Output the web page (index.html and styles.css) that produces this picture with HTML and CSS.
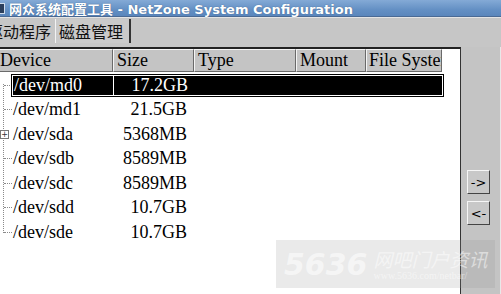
FILE: index.html
```html
<!DOCTYPE html>
<html lang="zh">

<head>
    <meta charset="UTF-8">
    <title>NetZone System Configuration</title>
    <link rel="stylesheet" href="styles.css">
</head>

<body>
    <div class="window">
        <header class="titlebar">
            <span class="title-icon"></span>
            <span class="title-text">网众系统配置工具 - NetZone System Configuration</span>
        </header>

        <nav class="tabs">
            <div class="tab tab-cut">驱动程序</div>
            <div class="tab tab-active">磁盘管理</div>
        </nav>

        <div class="main">
            <section class="listview">
                <div class="list-head">
                    <div class="col col-device">Device</div>
                    <div class="col col-size">Size</div>
                    <div class="col col-type">Type</div>
                    <div class="col col-mount">Mount</div>
                    <div class="col col-fs">File Syster</div>
                </div>

                <div class="list-body">
                    <div class="tree-line"></div>
                    <div class="row">
                        <span class="node"></span>
                        <span class="selection">
                            <span class="cell-device">/dev/md0</span>
                            <span class="cell-size">17.2GB</span>
                        </span>
                    </div>
                    <div class="row">
                        <span class="node"></span>
                        <span class="cell-device">/dev/md1</span>
                        <span class="cell-size">21.5GB</span>
                    </div>
                    <div class="row">
                        <span class="node node-expand"><span class="plus">+</span></span>
                        <span class="cell-device">/dev/sda</span>
                        <span class="cell-size">5368MB</span>
                    </div>
                    <div class="row">
                        <span class="node"></span>
                        <span class="cell-device">/dev/sdb</span>
                        <span class="cell-size">8589MB</span>
                    </div>
                    <div class="row">
                        <span class="node"></span>
                        <span class="cell-device">/dev/sdc</span>
                        <span class="cell-size">8589MB</span>
                    </div>
                    <div class="row">
                        <span class="node"></span>
                        <span class="cell-device">/dev/sdd</span>
                        <span class="cell-size">10.7GB</span>
                    </div>
                    <div class="row">
                        <span class="node"></span>
                        <span class="cell-device">/dev/sde</span>
                        <span class="cell-size">10.7GB</span>
                    </div>
                </div>
            </section>

            <aside class="sidebar">
                <button class="arrow-button">-&gt;</button>
                <button class="arrow-button">&lt;-</button>
            </aside>
        </div>

        <div class="watermark">
            <span class="wm-big">5636</span>
            <span class="wm-side">
                <span class="wm-cn">网吧门户资讯</span>
                <span class="wm-url">www.5636.com/netbar/</span>
            </span>
        </div>
    </div>
</body>

</html>
```

FILE: styles.css
```css
* {
    box-sizing: border-box;
    margin: 0;
    padding: 0;
}

body {
    background: #c6c6c6;
    font-family: 'Liberation Serif', serif;
    overflow: hidden;
}

.window {
    height: 294px;
    overflow: hidden;
    position: relative;
    width: 501px;
}

.titlebar {
    align-items: center;
    background: linear-gradient(180deg, #84aad6, #6490c4 60%, #5a86bc);
    border-bottom: 1px solid #4a6a94;
    display: flex;
    height: 17px;
}

.title-icon {
    background: #2b3f5c;
    border: 1px solid #cfdcec;
    height: 11px;
    margin-left: -3px;
    width: 8px;
}

.title-text {
    color: #fff;
    font-family: 'DejaVu Sans', 'Noto Sans CJK SC', sans-serif;
    font-size: 13px;
    font-weight: bold;
    margin-left: 4px;
    text-shadow: 0 0 1px #33557f;
    white-space: nowrap;
}

.tabs {
    align-items: flex-end;
    background: #c6c6c6;
    border-top: 1px solid #e4e4e4;
    display: flex;
    height: 30px;
    padding-bottom: 4px;
}

.tab {
    color: #111;
    font-family: 'Noto Sans CJK SC', sans-serif;
    font-size: 16px;
    height: 24px;
    line-height: 24px;
    white-space: nowrap;
}

.tab-cut {
    margin-left: -13px;
    padding-right: 4px;
}

.tab-active {
    background: #cacaca;
    border-left: 1px solid #f2f2f2;
    border-right: 2px solid #333;
    padding: 0 6px 0 3px;
}

.main {
    display: flex;
    height: 247px;
}

.listview {
    background: #fff;
    border-right: 1px solid #333;
    border-top: 2px solid #222;
    width: 461px;
}

.list-head {
    display: flex;
    height: 23px;
}

.col {
    background: #c4c4c4;
    border-bottom: 1px solid #6a6a6a;
    border-left: 1px solid #f4f4f4;
    border-right: 1px solid #6a6a6a;
    border-top: 1px solid #f4f4f4;
    color: #000;
    font-size: 18px;
    line-height: 20px;
    overflow: hidden;
    padding-left: 3px;
    white-space: nowrap;
}

.col-device {
    margin-left: -4px;
    width: 117px;
}

.col-size {
    width: 81px;
}

.col-type {
    width: 102px;
}

.col-mount {
    width: 70px;
}

.col-fs {
    padding-left: 2px;
    width: 76px;
}

.list-body {
    padding-top: 1px;
    position: relative;
}

.tree-line {
    border-left: 1px dotted #8a8a8a;
    height: 149px;
    left: 3px;
    position: absolute;
    top: 12px;
}

.row {
    align-items: center;
    display: flex;
    font-size: 18px;
    height: 24.5px;
    width: 443px;
}

.node {
    border-top: 1px dotted #8a8a8a;
    margin-left: 4px;
    width: 8px;
}

.node-expand {
    border-top: none;
    margin-left: 0;
    position: relative;
    width: 12px;
}

.plus {
    background: #fff;
    border: 1px solid #777;
    color: #333;
    display: block;
    font-family: 'DejaVu Sans', sans-serif;
    font-size: 8px;
    height: 9px;
    line-height: 7px;
    text-align: center;
    width: 9px;
}

.cell-device {
    padding-left: 1px;
    width: 105px;
}

.cell-size {
    text-align: right;
    width: 70px;
}

.selection {
    align-items: center;
    background: #000;
    border: 1px solid #fff;
    box-shadow: 0 0 0 1px #000;
    color: #fff;
    display: flex;
    flex: 1;
    height: 21px;
}

.selection .cell-size {
    border-left: 1px solid #fff;
    height: 19px;
    line-height: 19px;
    margin-left: -5px;
    width: 75px;
}

.sidebar {
    align-items: flex-end;
    background: #c4c4c4;
    border-right: 1px solid #e8e8e8;
    display: flex;
    flex: 1;
    flex-direction: column;
    gap: 7px;
    padding: 123px 10px 0 0;
}

.arrow-button {
    background: #c8c8c8;
    border-bottom: 1px solid #444;
    border-left: 1px solid #f6f6f6;
    border-right: 1px solid #444;
    border-top: 1px solid #f6f6f6;
    color: #000;
    font-family: 'DejaVu Sans', sans-serif;
    font-size: 13px;
    height: 24px;
    width: 23px;
}

.watermark {
    align-items: center;
    background: rgba(150, 150, 150, 0.2);
    display: flex;
    gap: 6px;
    height: 48px;
    left: 276px;
    padding-left: 8px;
    position: absolute;
    top: 240px;
    width: 219px;
}

.wm-big {
    color: rgba(255, 255, 255, 0.55);
    font-family: 'DejaVu Sans', sans-serif;
    font-size: 30px;
    font-style: italic;
    font-weight: bold;
}

.wm-side {
    display: flex;
    flex-direction: column;
}

.wm-cn {
    color: rgba(255, 255, 255, 0.5);
    font-family: 'Noto Sans CJK SC', sans-serif;
    font-size: 19px;
    font-style: italic;
    line-height: 22px;
}

.wm-url {
    color: rgba(255, 255, 255, 0.5);
    font-size: 10px;
    line-height: 11px;
}
```
